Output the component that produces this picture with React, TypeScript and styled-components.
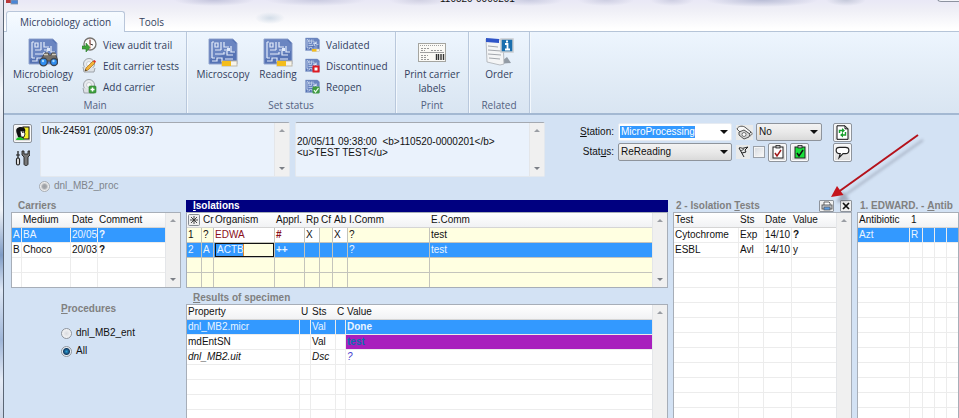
import React from "react";
import styled, { createGlobalStyle, css } from "styled-components";

const uiFont = `"Liberation Sans", Arial, sans-serif`;
const ribbonFont = `"Open Sans", "Noto Sans", sans-serif`;

const color = {
  body: "#d3e2f4",
  field: "#eaf2fc",
  select: "#3399ff",
  cream: "#ffffe1",
  navy: "#000080",
  muted: "#808080",
  border: "#a7aeb8",
  ribbonText: "#33415e",
};

const GlobalStyle = createGlobalStyle`
  *, *::before, *::after { box-sizing: border-box; }
  body { margin: 0; background: ${color.body}; }
  button, input, select, textarea { font: inherit; color: inherit; margin: 0; }
`;

/* ---------- window ---------- */

const Window = styled.div`
  position: relative;
  display: flex;
  height: 100vh;
  min-height: 300px;
  overflow: hidden;
  font: 10px/12px ${uiFont};
  color: #111;
`;

const Edge = styled.div`
  flex: 0 0 4px;
  border-right: 1px solid #5b6675;
  background: linear-gradient(#e9e9f2 0, #cfd5e2 50px, #f4f6fa 90px, #d5dce9 150px, #f0f3f8 210px, #7f9cc6 255px, #dfe8f5 290px, #9fb6d8 340px, #e6ecf6 380px, #c9d4e6);
`;

const Frame = styled.div`
  flex: 1;
  min-width: 0;
  display: flex;
  flex-direction: column;
  background: ${color.body};
`;

const Caption = styled.div`
  display: flex;
  flex-direction: column;
  height: 31px;
  background:
    radial-gradient(ellipse 40px 6px at 210px 0, #c3c4dc, transparent),
    radial-gradient(ellipse 50px 6px at 312px 0, #c9cae0, transparent),
    radial-gradient(ellipse 30px 6px at 415px 0, #d0d0e2, transparent),
    radial-gradient(ellipse 34px 6px at 525px 0, #c9cbe0, transparent),
    radial-gradient(ellipse 28px 6px at 602px 0, #cdcee2, transparent),
    radial-gradient(ellipse 22px 6px at 668px 0, #cdcee2, transparent),
    radial-gradient(ellipse 56px 7px at 758px 0, #b9bdd6, transparent),
    radial-gradient(ellipse 20px 6px at 842px 0, #c5c9da, transparent),
    radial-gradient(ellipse 15px 6px at 266px 18px, #d3dde8, transparent),
    linear-gradient(#e9e8f6, #efeff6 10px, #ffffff 29px);
`;

const TitleLine = styled.div`
  display: flex;
  align-items: flex-end;
  justify-content: space-between;
  height: 5px;
  padding-left: 2px;
  overflow: hidden;
`;

const TitleText = styled.span`
  font: 10px/12px ${uiFont};
  color: #111;
`;

const WindowControl = styled.button`
  width: 22px;
  height: 12px;
  margin-bottom: 3px;
  padding: 0;
  border: 1px solid #8d93a0;
  border-right: 0;
  border-radius: 0 0 0 4px;
  background: #f4f5fa;
`;

const TabList = styled.div`
  display: flex;
  flex: 1;
  align-items: flex-end;
  padding-left: 2px;
`;

const Tab = styled.button<{ $active?: boolean }>`
  height: 21px;
  margin-bottom: -1px;
  padding: 0 13px;
  border: 1px solid ${(p) => (p.$active ? "#b9c6da" : "transparent")};
  border-bottom: 0;
  border-radius: 3px 3px 0 0;
  background: ${(p) => (p.$active ? "linear-gradient(#f7fbff, #edf5fe)" : "none")};
  font: 10px/18px ${ribbonFont};
  color: ${color.ribbonText};
  position: relative;
`;

/* ---------- ribbon ---------- */

const Ribbon = styled.div`
  display: flex;
  flex: none;
  height: 84px;
  border-top: 1px solid #b5c4d8;
  border-bottom: 2px solid #a3b8d2;
  background: linear-gradient(#edf5fe, #e3edf7 50%, #d9e5f2);
  font: 10px/14px ${ribbonFont};
  color: ${color.ribbonText};
`;

const Group = styled.section<{ $width: number }>`
  display: flex;
  flex-direction: column;
  flex: 0 0 ${(p) => p.$width}px;
  padding-top: 2px;
  border-right: 1px solid #b9c8dc;
  box-shadow: 1px 0 #f3f8fd;
`;

const GroupBody = styled.div<{ $center?: boolean }>`
  display: flex;
  height: 63px;
  justify-content: ${(p) => (p.$center ? "center" : "flex-start")};
  padding-left: ${(p) => (p.$center ? 0 : 6)}px;
`;

const GroupLabel = styled.div`
  margin-top: 1px;
  text-align: center;
  color: #53617f;
`;

const BigButton = styled.button<{ $width: number }>`
  display: flex;
  flex-direction: column;
  align-items: center;
  flex: 0 0 ${(p) => p.$width}px;
  padding: 3px 0 0;
  border: 0;
  background: none;
  line-height: 14px;
`;

const BigIcon = styled.span`
  display: flex;
  align-items: center;
  justify-content: center;
  height: 30px;
`;

const SmallList = styled.div<{ $inset: number }>`
  display: flex;
  flex-direction: column;
  padding-left: ${(p) => p.$inset}px;
`;

const SmallButton = styled.button`
  display: flex;
  align-items: center;
  gap: 6px;
  height: 21px;
  padding: 0;
  border: 0;
  background: none;
  white-space: nowrap;
`;

/* ---------- header form ---------- */

const Body = styled.main`
  flex: 1;
  min-height: 0;
  display: flex;
  flex-direction: column;
  padding: 7px 0 0 7px;
`;

const HeaderRow = styled.div`
  display: flex;
  flex: none;
  height: 55px;
`;

const ToolColumn = styled.div`
  display: flex;
  flex-direction: column;
  gap: 6px;
  flex: 0 0 29px;
  padding: 2px 0 0 2px;
`;

const IconButton = styled.button<{ $flat?: boolean }>`
  display: flex;
  align-items: center;
  justify-content: center;
  width: 19px;
  height: 19px;
  padding: 0;
  border: 1px solid ${(p) => (p.$flat ? "transparent" : "#8e949c")};
  border-radius: 2px;
  background: ${(p) => (p.$flat ? "none" : "linear-gradient(#f6f6f6, #dcdcdc)")};
  box-shadow: ${(p) => (p.$flat ? "none" : "inset 0 0 0 1px #fafafa")};
`;

const NoteBox = styled.div`
  display: flex;
  flex: 0 1 250px;
  margin-right: 5px;
  border: 1px solid #e3e8ee;
  border-top-color: #a4a9b1;
  border-radius: 2px;
  background: ${color.field};
`;

const NoteText = styled.textarea`
  flex: 1;
  min-width: 0;
  padding: 2px 1px;
  border: 0;
  outline: 0;
  resize: none;
  overflow: hidden;
  white-space: pre;
  background: transparent;
  line-height: 11px;
`;

const Track = styled.div`
  display: flex;
  flex-direction: column;
  justify-content: space-between;
  align-items: center;
  flex: 0 0 15px;
  padding: 6px 0;
  background: #f0f0f0;
  border-left: 1px solid #e4e6e9;
`;

const Arrow = styled.span<{ $down?: boolean }>`
  width: 0;
  height: 0;
  border: 3px solid transparent;
  ${(p) =>
    p.$down
      ? css`border-top-color: #7b7f86; border-bottom: 0;`
      : css`border-bottom-color: #9a9da3; border-top: 0;`}
`;

const Form = styled.form`
  display: grid;
  grid-template-columns: 34px 114px 93px 18px;
  grid-auto-rows: 18px;
  gap: 2px 4px;
  margin-left: 30px;
  padding-top: 1px;
  align-items: center;
`;

const FieldLabel = styled.label`
  display: flex;
  justify-content: flex-end;
  white-space: nowrap;
`;

const Extras = styled.div`
  display: flex;
  align-items: center;
  gap: 3px;
`;

const SelectWrap = styled.div`
  position: relative;
  flex: none;
`;

const Select = styled.select<{ $highlight?: boolean; $width: number }>`
  display: block;
  appearance: none;
  width: ${(p) => p.$width}px;
  height: 18px;
  padding: 0 2px;
  outline: 0;
  border: 1px solid #8e949c;
  border-radius: 2px;
  background: linear-gradient(#f3f3f3, #e9e9e9 50%, #dadada);
  ${(p) =>
    p.$highlight &&
    css`
      color: #fff;
      border-color: #e6ebf2;
      background: linear-gradient(${color.select}, ${color.select}) 1px 2px / 75px 12px no-repeat, #fff;
    `}
`;

const SelectArrow = styled.span`
  position: absolute;
  right: 4px;
  top: 7px;
  border: 4px solid transparent;
  border-top-color: #111;
  border-bottom: 0;
  pointer-events: none;
`;

const Check = styled.input`
  appearance: none;
  width: 12px;
  height: 12px;
  border: 1px solid #9aa0a8;
  background: linear-gradient(135deg, #d4d8de, #fbfbfb);
  box-shadow: inset 0 0 0 1px #f4f4f4;
`;

const OptionRow = styled.label<{ $disabled?: boolean }>`
  display: flex;
  align-items: center;
  gap: 4px;
  height: 18px;
  color: ${(p) => (p.$disabled ? "#7f858c" : "#111")};
`;

const HeaderOption = styled.div`
  padding: 0 0 5px 28px;
`;

const Radio = styled.input`
  appearance: none;
  width: 11px;
  height: 11px;
  border: 1px solid #8f959d;
  border-radius: 50%;
  background: radial-gradient(circle, #d9dbdf, #fff);
  &:checked {
    background: radial-gradient(circle, #2c9fd8 0, #133c63 3px, #e9eef3 4px);
  }
  &:disabled {
    border-color: #a9adb2;
    background: radial-gradient(circle, #9b9ea3 0, #a5a8ac 2px, #eeeeee 4px);
  }
`;

/* ---------- panels ---------- */

const Panels = styled.div`
  display: grid;
  grid-template-columns: 170px minmax(0, 1fr) 179px 102px;
  gap: 5px;
  flex: 1;
  min-height: 0;
`;

const Column = styled.div`
  display: flex;
  flex-direction: column;
  min-width: 0;
  min-height: 0;
`;

const PanelTitle = styled.h2<{ $active?: boolean; $tight?: boolean }>`
  display: flex;
  align-items: center;
  flex: none;
  height: 12px;
  margin: 0;
  padding-left: ${(p) => (p.$tight ? 3 : 7)}px;
  white-space: pre;
  font: bold 10px/12px ${uiFont};
  color: ${(p) => (p.$active ? "#fff" : color.muted)};
  background: ${(p) => (p.$active ? color.navy : "none")};
`;

const TitleButtons = styled.span`
  display: flex;
  gap: 6px;
  margin-left: auto;
`;

const TitleButton = styled.button<{ $width: number }>`
  display: flex;
  align-items: center;
  justify-content: center;
  width: ${(p) => p.$width}px;
  height: 12px;
  padding: 0;
  border: 1px solid #8e949c;
  border-radius: 1px;
  background: #f0f0f0;
`;

const GridBox = styled.div<{ $short?: boolean }>`
  display: flex;
  ${(p) => (p.$short ? "flex: 0 0 76px;" : "flex: 1 1 0;")}
  min-height: 0;
  overflow: hidden;
  border: 1px solid ${color.border};
  ${(p) => !p.$short && "border-bottom: 0;"}
  background: #fff;
`;

const TableArea = styled.div`
  flex: 1;
  min-width: 0;
  overflow: hidden;
`;

const Table = styled.table<{ $line: string; $fill: string }>`
  width: 100%;
  table-layout: fixed;
  border-collapse: separate;
  border-spacing: 0;
  td {
    border-color: ${(p) => p.$line};
    background-color: ${(p) => p.$fill};
  }
`;

const Col = styled.col<{ $width?: number }>`
  width: ${(p) => (p.$width ? p.$width + "px" : "auto")};
`;

const HeadCell = styled.th`
  height: 15px;
  padding: 0 0 0 1px;
  border-bottom: 1px solid #d5d5d5;
  background: linear-gradient(#ffffff, #f1f2f4);
  text-align: left;
  font-weight: normal;
  white-space: nowrap;
  line-height: 14px;
`;

type Tone = "plain" | "maroon" | "purple" | "link";

const tones: Record<Tone, string> = {
  plain: "inherit",
  maroon: "#8b0f1a",
  purple: "#0a6fae",
  link: "#4a3fd0",
};

const Row = styled.tr<{ $selected?: boolean; $italic?: boolean }>`
  font-style: ${(p) => (p.$italic ? "italic" : "normal")};
  ${(p) =>
    p.$selected &&
    css`
      color: #eaf5ff;
      && td { background-color: ${color.select}; }
    `}
`;

const Cell = styled.td<{ $tone?: Tone; $bold?: boolean; $white?: boolean }>`
  height: 15px;
  padding: 0 0 0 1px;
  border-right: 1px solid;
  border-bottom: 1px solid;
  overflow: hidden;
  white-space: nowrap;
  line-height: 14px;
  color: ${(p) => tones[p.$tone ?? "plain"]};
  font-weight: ${(p) => (p.$bold ? "bold" : "normal")};
  &:last-child { border-right: 0; }
  ${(p) => p.$white && css`&&& { background-color: #fff; }`}
  ${(p) => p.$tone === "purple" && css`&&& { background-color: #a81fbd; }`}
`;

const CellInput = styled.input`
  display: block;
  width: 100%;
  height: 14px;
  padding: 0 1px;
  border: 1px solid #111;
  outline: 0;
  color: #eaf5ff;
  background: linear-gradient(90deg, ${color.select} 27px, #e08a2c 27px, #e08a2c 28px, ${color.cream} 28px);
`;

const Procedures = styled.fieldset`
  margin: 15px 0 0 50px;
  padding: 0;
  border: 0;
`;

const ProceduresTitle = styled.legend`
  padding: 0;
  margin-bottom: 9px;
  font: bold 10px/12px ${uiFont};
  color: ${color.muted};
`;

const Gap = styled.div`
  flex: 0 0 4px;
`;

const Pointer = styled.svg`
  position: absolute;
  left: 824px;
  top: 128px;
  pointer-events: none;
`;

/* ---------- icons ---------- */

const BlockSvg = styled.svg`
  display: block;
`;

type Badge = "binoculars" | "bar" | "stop" | "ok";

const Board = ({ size, badge }: { size: number; badge: Badge }) => (
  <svg width={size} height={size} viewBox="0 0 30 30" aria-hidden="true">
    <path d="M1 2h24l4 4v21H1z" fill="#5673b4" stroke="#93a6cf" />
    <path d="M2 3h22l4 4v7L2 22z" fill="#7d97cd" opacity=".5" />
    <path
      d="M4 5v16M4 5h2M7 6h3v4H7zM7 13h6M13 5v8M16 5v5h5M16 13h5v-2M23 9v6h4M7 17h9v-2M19 14v4h6M4 21h3M4 24h5v-3h5v4M17 22h8"
      fill="none"
      stroke="#e3ecfa"
      strokeWidth="1.2"
    />
    <rect x="19" y="11" width="3" height="3" fill="#dfe9fa" />
    {badge === "binoculars" && (
      <g>
        <path d="M12 24l5-8h3l1 2h2l1-2h3l3 8z" fill="#77716a" stroke="#4c4a47" />
        <path d="M16 17.500h4M24 17.500h4" stroke="#cfc9bd" strokeWidth="1.5" />
        <circle cx="15.500" cy="25" r="3.800" fill="#2f8df0" stroke="#3b4552" strokeWidth="1.300" />
        <circle cx="26" cy="25" r="3.500" fill="#2f8df0" stroke="#3b4552" strokeWidth="1.300" />
        <circle cx="15" cy="24" r="1.200" fill="#a8dcff" />
        <circle cx="25.500" cy="24" r="1.200" fill="#a8dcff" />
      </g>
    )}
    {badge === "bar" && (
      <g>
        <rect x="14" y="24" width="15" height="5" fill="#f6f3ea" stroke="#bdb8aa" />
        <rect x="14" y="24" width="9" height="5" fill="#f3bd1c" />
      </g>
    )}
    {badge === "stop" && <rect x="17" y="17" width="10" height="10" fill="#fff" stroke="#dd1a22" strokeWidth="4" />}
    {badge === "ok" && (
      <g>
        <rect x="15" y="15" width="14" height="14" rx="2" fill="#3f9a3f" />
        <path d="M18 22l3 4 6-8" fill="none" stroke="#e9ffe9" strokeWidth="2.500" />
      </g>
    )}
  </svg>
);

const AuditIcon = () => (
  <svg width="15" height="15" viewBox="0 0 15 15" aria-hidden="true">
    <circle cx="8" cy="7" r="6" fill="#fbfbfb" stroke="#77736f" strokeWidth="1.300" />
    <path d="M8 3v4" stroke="#333" />
    <path d="M8 7l3 1" stroke="#333" />
    <path d="M8 2v10" stroke="#e06a5a" strokeWidth=".7" />
    <path d="M0 9h4V6l4 4.500-4 4.500v-3H0z" fill="#3ea33a" stroke="#2a7a2a" strokeWidth=".6" />
  </svg>
);

const Dish = () => (
  <>
    <circle cx="7" cy="6" r="5.500" fill="#e8ebee" stroke="#9da3aa" />
    <path d="M1 9l1 5h10l1-4" fill="#dde1e5" stroke="#9da3aa" />
    <circle cx="7" cy="6" r="2.500" fill="#f8f9fa" stroke="#b9bec4" strokeWidth=".7" />
  </>
);

const EditIcon = () => (
  <svg width="15" height="15" viewBox="0 0 15 15" aria-hidden="true">
    <Dish />
    <path d="M3 13l1-3 7-7 2 2-7 7z" fill="#f3b33a" stroke="#a86e16" strokeWidth=".7" />
    <path d="M11 3l1.500-1 1.500 1.500-1 1.500z" fill="#e0342c" />
    <path d="M3 13l.6-1.800L5 12.500z" fill="#333" />
  </svg>
);

const AddIcon = () => (
  <svg width="15" height="15" viewBox="0 0 15 15" aria-hidden="true">
    <Dish />
    <rect x="7" y="7" width="7" height="7" rx="1" fill="#3ca13c" stroke="#2b7a2b" strokeWidth=".6" />
    <path d="M10.500 8.500v4M8.500 10.500h4" stroke="#fff" strokeWidth="1.500" />
  </svg>
);

const LabelIcon = () => (
  <svg width="28" height="19" viewBox="0 0 28 19" aria-hidden="true">
    <rect x=".5" y=".5" width="27" height="18" fill="#fbfaf6" stroke="#a5a5a0" />
    <path d="M2 2.500h24" stroke="#a0a0a0" strokeDasharray="1 1" />
    <path d="M2 9.500h24" stroke="#a0a0a0" />
    <path d="M3 5.500h8M3 7.500h4M13 7.500h12M3 12.500h7M3 14.500h5M3 16.500h9" stroke="#999" strokeDasharray="2 1" />
    <path d="M18.500 11v6M20.500 11v6M23 11v6M25.500 11v6" stroke="#333" strokeWidth="1.400" />
  </svg>
);

const OrderIcon = () => (
  <svg width="30" height="30" viewBox="0 0 30 30" aria-hidden="true">
    <path d="M14 27l13-1-4-6z" fill="#6f7782" opacity=".7" />
    <path d="M2 2l17 1 1 24-4 1L3 25z" fill="#f4f5f6" stroke="#a9adb3" strokeWidth=".8" />
    <path d="M2 1l13 1v4L2 5z" fill="#2f55c8" />
    <path d="M4 9l10 1M4 13l13 1M4 17l13 1M5 21l11 1" stroke="#a3a7ad" />
    <rect x="17" y="2" width="12" height="13" fill="#1b6fae" stroke="#c9ccd0" strokeWidth="1.500" />
    <path d="M21 7h2.500v5M21 12.500h5M22 4.500h2" stroke="#fff" strokeWidth="1.800" fill="none" />
  </svg>
);

const ProfileIcon = () => (
  <svg width="15" height="15" viewBox="0 0 15 15" aria-hidden="true">
    <rect x="8" y="1" width="6" height="12" fill="#f3ee2a" stroke="#111" />
    <path d="M2 8C0 3 2 1 6 1c4 0 5 3 4 5l-1 5-3 2-3-2z" fill="#111" />
    <path d="M5 5h4l1 3-1 3H6z" fill="#fff" stroke="#111" strokeWidth=".8" />
    <path d="M7 6h1v1" stroke="#111" fill="none" />
    <path d="M1 14c0-2 2-3 5-3l4 3z" fill="#1fc52b" />
  </svg>
);

const ToolsIcon = () => (
  <svg width="15" height="17" viewBox="0 0 15 17" aria-hidden="true">
    <path d="M3 1v7" stroke="#222" strokeWidth="1.300" />
    <rect x="1.500" y="8" width="3" height="7" rx="1.500" fill="#f2f2f2" stroke="#222" strokeWidth="1.200" />
    <path d="M1 5h4" stroke="#222" />
    <path d="M7 1v4l2 2v7c0 2 4 2 4 0V7l2-2V1h-2v3H9V1z" fill="#777" stroke="#222" strokeWidth=".9" />
  </svg>
);

const PhoneIcon = () => (
  <svg width="17" height="15" viewBox="0 0 17 15" aria-hidden="true">
    <rect width="17" height="15" fill="#e9eaea" />
    <path d="M1 4c1-3 6-4 9-1l5 4-2 2-4-3-5 1z" fill="#f8f8f8" stroke="#444" strokeWidth=".9" />
    <path d="M3 7l5-2 6 4-1 3-5 2-5-4z" fill="#d5d5d5" stroke="#444" strokeWidth=".9" />
    <circle cx="8" cy="9.500" r="2" fill="#fff" stroke="#555" strokeWidth=".8" />
    <path d="M15 7c2 1 1 3-1 4" fill="none" stroke="#444" strokeWidth=".8" />
  </svg>
);

const FlagIcon = () => (
  <svg width="14" height="14" viewBox="0 0 14 14" aria-hidden="true">
    <rect width="14" height="14" fill="#e9eaea" />
    <path d="M3 3l5 9M3 3c2-1 3 1 5 0l4-1-3 3 1 2-4 1" fill="none" stroke="#222" />
    <path d="M5 6l3-2" stroke="#222" strokeWidth=".8" />
  </svg>
);

const ClipIcon = ({ fill, tick }: { fill: string; tick: string }) => (
  <svg width="12" height="14" viewBox="0 0 12 14" aria-hidden="true">
    <rect x="1" y="2" width="10" height="11" fill={fill} stroke="#222" />
    <rect x="4" y=".5" width="4" height="2.500" fill="#bbb" stroke="#222" strokeWidth=".8" />
    <path d="M3 8l2 3 4-6" fill="none" stroke={tick} strokeWidth="1.500" />
  </svg>
);

const RefreshIcon = () => (
  <svg width="13" height="15" viewBox="0 0 13 15" aria-hidden="true">
    <path d="M1 .8h8l3 3v10.500H1z" fill="#fff" stroke="#111" />
    <path d="M9 .8v3h3" fill="none" stroke="#111" />
    <path d="M3.500 8V5.500H6M9.500 7v3H7" fill="none" stroke="#18a02c" strokeWidth="1.400" />
    <path d="M6 3l3 2.500L6 8zM7 7.500L4 10l3 2.500z" fill="#18a02c" />
  </svg>
);

const SpeechIcon = () => (
  <svg width="15" height="15" viewBox="0 0 13 13" aria-hidden="true">
    <path
      d="M4 2h5c2 0 3 1 3 2.500S11 7.500 9 7.500H7L3.500 11 4.500 7.500C2 7.500 1 6 1 4.500S2 2 4 2z"
      fill="#fff"
      stroke="#222"
    />
  </svg>
);

const PrinterIcon = () => (
  <svg width="12" height="10" viewBox="0 0 12 10" aria-hidden="true">
    <path d="M3 4V1h5l1 1v2" fill="#fff" stroke="#555" strokeWidth=".9" />
    <rect x="1" y="4" width="10" height="4" fill="#c8cdd4" stroke="#555" strokeWidth=".9" />
    <rect x="3" y="6" width="6" height="3" fill="#5d9be0" stroke="#555" strokeWidth=".7" />
  </svg>
);

const CrossIcon = () => (
  <svg width="8" height="8" viewBox="0 0 8 8" aria-hidden="true">
    <path d="M1 1l6 6M7 1L1 7" stroke="#111" strokeWidth="1.700" />
  </svg>
);

const StarIcon = () => (
  <BlockSvg width="12" height="12" viewBox="0 0 12 12" aria-label="All rows">
    <rect x=".5" y=".5" width="11" height="11" rx="1" fill="#eee" stroke="#858b92" />
    <path d="M6 2v8M2 6h8M3 3l6 6M9 3l-6 6" stroke="#333" strokeWidth=".9" />
  </BlockSvg>
);

const AppIcon = () => (
  <svg width="12" height="5" viewBox="0 0 12 5" aria-hidden="true">
    <rect x="0" width="5" height="3" fill="#b8383a" />
    <rect x="5" width="7" height="4" fill="#4a86d8" stroke="#8b93a0" strokeWidth=".8" />
  </svg>
);

/* ---------- building blocks ---------- */

const Scrollbar = ({ both }: { both?: boolean }) => (
  <Track>
    <Arrow />
    {both && <Arrow $down />}
  </Track>
);

interface CellData {
  text?: React.ReactNode;
  tone?: Tone;
  bold?: boolean;
  white?: boolean;
}
interface RowData {
  cells: (CellData | string)[];
  selected?: boolean;
  italic?: boolean;
}
interface GridProps {
  label: string;
  widths: number[];
  head: React.ReactNode[];
  rows: RowData[];
  blank: number;
  line?: string;
  fill?: string;
}

const Grid = ({ label, widths, head, rows, blank, line = "#ececec", fill = "#ffffff" }: GridProps) => {
  const blanks: RowData[] = Array.from({ length: blank }, () => ({ cells: head.map(() => "") }));
  return (
    <TableArea>
      <Table $line={line} $fill={fill} aria-label={label}>
        <colgroup>
          {head.map((_, i) => (
            <Col key={i} $width={widths[i]} />
          ))}
        </colgroup>
        <thead>
          <tr>
            {head.map((h, i) => (
              <HeadCell key={i}>{h}</HeadCell>
            ))}
          </tr>
        </thead>
        <tbody>
          {[...rows, ...blanks].map((r, i) => (
            <Row key={i} $selected={r.selected} $italic={r.italic}>
              {r.cells.map((c, j) => {
                const d = typeof c === "string" ? { text: c } : c;
                return (
                  <Cell key={j} $tone={d.tone} $bold={d.bold} $white={d.white}>
                    {d.text}
                  </Cell>
                );
              })}
            </Row>
          ))}
        </tbody>
      </Table>
    </TableArea>
  );
};

export default function App() {
  return (
    <Window>
      <GlobalStyle />
      <Edge />
      <Frame>
        <Caption>
          <TitleLine>
            <AppIcon />
            <TitleText>110520-0000201</TitleText>
            <WindowControl aria-label="Minimize" />
          </TitleLine>
          <TabList role="tablist">
            <Tab role="tab" aria-selected="true" $active>Microbiology action</Tab>
            <Tab role="tab" aria-selected="false">Tools</Tab>
          </TabList>
        </Caption>

        <Ribbon>
          <Group $width={183}>
            <GroupBody>
              <BigButton $width={66}>
                <BigIcon><Board size={30} badge="binoculars" /></BigIcon>
                Microbiology<br />screen
              </BigButton>
              <SmallList $inset={6}>
                <SmallButton><AuditIcon />View audit trail</SmallButton>
                <SmallButton><EditIcon />Edit carrier tests</SmallButton>
                <SmallButton><AddIcon />Add carrier</SmallButton>
              </SmallList>
            </GroupBody>
            <GroupLabel>Main</GroupLabel>
          </Group>
          <Group $width={209}>
            <GroupBody>
              <BigButton $width={60}>
                <BigIcon><Board size={30} badge="bar" /></BigIcon>
                Microscopy
              </BigButton>
              <BigButton $width={50}>
                <BigIcon><Board size={30} badge="bar" /></BigIcon>
                Reading
              </BigButton>
              <SmallList $inset={2}>
                <SmallButton><Board size={15} badge="bar" />Validated</SmallButton>
                <SmallButton><Board size={15} badge="stop" />Discontinued</SmallButton>
                <SmallButton><Board size={15} badge="ok" />Reopen</SmallButton>
              </SmallList>
            </GroupBody>
            <GroupLabel>Set status</GroupLabel>
          </Group>
          <Group $width={73}>
            <GroupBody $center>
              <BigButton $width={66}>
                <BigIcon><LabelIcon /></BigIcon>
                Print carrier<br />labels
              </BigButton>
            </GroupBody>
            <GroupLabel>Print</GroupLabel>
          </Group>
          <Group $width={61}>
            <GroupBody $center>
              <BigButton $width={50}>
                <BigIcon><OrderIcon /></BigIcon>
                Order
              </BigButton>
            </GroupBody>
            <GroupLabel>Related</GroupLabel>
          </Group>
        </Ribbon>

        <Body>
          <HeaderRow>
            <ToolColumn>
              <IconButton aria-label="Patient"><ProfileIcon /></IconButton>
              <IconButton $flat aria-label="Settings"><ToolsIcon /></IconButton>
            </ToolColumn>
            <NoteBox>
              <NoteText aria-label="Specimen" spellCheck={false} defaultValue="Unk-24591 (20/05 09:37)" />
              <Scrollbar both />
            </NoteBox>
            <NoteBox>
              <NoteText
                aria-label="Remarks"
                spellCheck={false}
                defaultValue={"\n20/05/11 09:38:00  <b>110520-0000201</b>\n<u>TEST TEST</u>"}
              />
              <Scrollbar both />
            </NoteBox>
            <Form>
              <FieldLabel htmlFor="station"><u>S</u>tation:</FieldLabel>
              <SelectWrap>
                <Select id="station" $width={114} $highlight><option>MicroProcessing</option></Select>
                <SelectArrow />
              </SelectWrap>
              <Extras>
                <PhoneIcon />
                <SelectWrap>
                  <Select aria-label="Phone" $width={66}><option>No</option></Select>
                  <SelectArrow />
                </SelectWrap>
              </Extras>
              <IconButton type="button" aria-label="Refresh"><RefreshIcon /></IconButton>
              <FieldLabel htmlFor="status">Stat<u>u</u>s:</FieldLabel>
              <SelectWrap>
                <Select id="status" $width={114}><option>ReReading</option></Select>
                <SelectArrow />
              </SelectWrap>
              <Extras>
                <FlagIcon />
                <Check type="checkbox" aria-label="Flag" />
                <IconButton type="button" aria-label="Validate"><ClipIcon fill="#fff" tick="#a01818" /></IconButton>
                <IconButton type="button" aria-label="Validate all"><ClipIcon fill="#19e03a" tick="#111" /></IconButton>
              </Extras>
              <IconButton type="button" aria-label="Comment"><SpeechIcon /></IconButton>
            </Form>
          </HeaderRow>

          <HeaderOption>
            <OptionRow $disabled>
              <Radio type="radio" name="proc" disabled defaultChecked />
              dnl_MB2_proc
            </OptionRow>
          </HeaderOption>

          <Panels>
            <Column>
              <PanelTitle>Carriers</PanelTitle>
              <GridBox $short>
                <Grid
                  label="Carriers"
                  widths={[10, 49, 27]}
                  head={["", "Medium", "Date", "Comment"]}
                  rows={[
                    { selected: true, cells: ["A", "BA", "20/05", { text: "?", bold: true }] },
                    { cells: ["B", "Choco", "20/03", { text: "?", bold: true }] },
                  ]}
                  blank={2}
                />
                <Scrollbar both />
              </GridBox>
              <Procedures>
                <ProceduresTitle><u>P</u>rocedures</ProceduresTitle>
                <OptionRow><Radio type="radio" name="set" />dnl_MB2_ent</OptionRow>
                <OptionRow><Radio type="radio" name="set" defaultChecked />All</OptionRow>
              </Procedures>
            </Column>

            <Column>
              <PanelTitle $active><u>I</u>solations</PanelTitle>
              <GridBox $short>
                <Grid
                  label="Isolations"
                  widths={[15, 12, 61, 30, 15, 13, 15, 82]}
                  head={[<StarIcon />, "Cr", "Organism", "Apprl.", "Rp", "Cf", "Ab", "I.Comm", "E.Comm"]}
                  line="#c4c4bc"
                  fill={color.cream}
                  rows={[
                    {
                      cells: [
                        "1",
                        "?",
                        { text: "EDWA", tone: "maroon", white: true },
                        { text: "#", tone: "maroon", bold: true, white: true },
                        { text: "X", white: true },
                        "",
                        { text: "X", white: true },
                        "?",
                        "test",
                      ],
                    },
                    {
                      selected: true,
                      cells: [
                        "2",
                        "A",
                        { text: <CellInput aria-label="Organism" defaultValue="ACTB" /> },
                        { text: "++", bold: true },
                        "",
                        "",
                        "",
                        "?",
                        "test",
                      ],
                    },
                  ]}
                  blank={2}
                />
                <Scrollbar both />
              </GridBox>
              <Gap />
              <PanelTitle><u>R</u>esults of specimen</PanelTitle>
              <GridBox>
                <Grid
                  label="Results of specimen"
                  widths={[113, 11, 25, 10]}
                  head={["Property", "U", "Sts", "C", "Value"]}
                  rows={[
                    { selected: true, cells: ["dnl_MB2.micr", "", "Val", "", { text: "Done", bold: true }] },
                    { cells: ["mdEntSN", "", "Val", "", { text: "test", tone: "purple", bold: true }] },
                    { italic: true, cells: ["dnl_MB2.uit", "", "Dsc", "", { text: "?", tone: "link" }] },
                  ]}
                  blank={20}
                />
                <Scrollbar />
              </GridBox>
            </Column>

            <Column>
              <PanelTitle $tight>
                <span>2 - Isolation <u>T</u>ests</span>
                <TitleButtons>
                  <TitleButton $width={15} aria-label="Print"><PrinterIcon /></TitleButton>
                  <TitleButton $width={12} aria-label="Close"><CrossIcon /></TitleButton>
                </TitleButtons>
              </PanelTitle>
              <GridBox>
                <Grid
                  label="Isolation tests"
                  widths={[65, 25, 28]}
                  head={["Test", "Sts", "Date", "Value"]}
                  rows={[
                    { cells: ["Cytochrome", "Exp", "14/10", { text: "?", bold: true }] },
                    { cells: ["ESBL", "Avl", "14/10", "y"] },
                  ]}
                  blank={20}
                />
                <Scrollbar />
              </GridBox>
            </Column>

            <Column>
              <PanelTitle $tight>1. EDWARD. - <u>A</u>ntib</PanelTitle>
              <GridBox>
                <Grid
                  label="Antibiotics"
                  widths={[52, 13, 12, 12]}
                  head={["Antibiotic", "1", "", "", ""]}
                  rows={[{ selected: true, cells: ["Azt", "R", "", "", ""] }]}
                  blank={20}
                />
              </GridBox>
            </Column>
          </Panels>
        </Body>
      </Frame>

      <Pointer width="110" height="80" viewBox="0 0 110 80" aria-hidden="true">
        <defs>
          <filter id="soft" x="-10%" y="-10%" width="130%" height="130%">
            <feGaussianBlur stdDeviation="1.500" />
          </filter>
        </defs>
        <g filter="url(#soft)" opacity=".3" stroke="#334" fill="#334">
          <path d="M99 12L21 67" strokeWidth="2" />
          <path d="M13 74l6-10 6 8z" />
        </g>
        <path d="M94 7L15 63.500" stroke="#b5121b" strokeWidth="2" />
        <path d="M7 69l6-11 6.500 9z" fill="#c4141c" />
      </Pointer>
    </Window>
  );
}
